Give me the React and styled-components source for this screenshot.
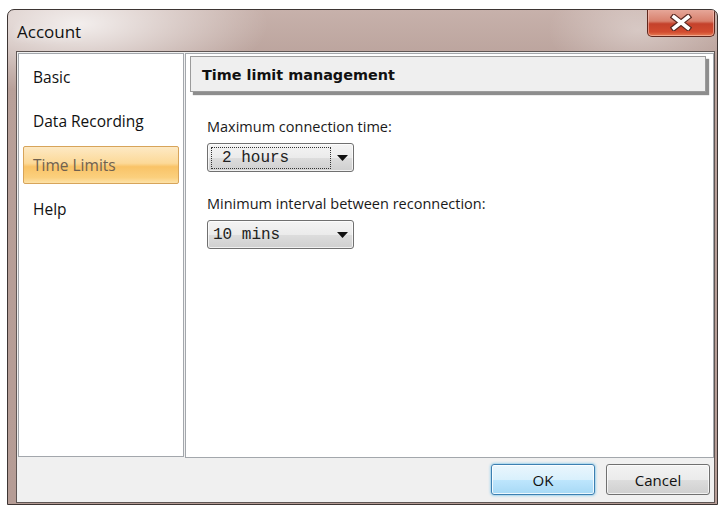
import React, { useState } from 'react'
import styled, { createGlobalStyle } from 'styled-components'

const Global = createGlobalStyle`
  html, body {
    margin: 0;
    padding: 0;
    background: #ffffff;
  }
  body {
    font-family: "Open Sans", "Noto Sans", sans-serif;
  }
`

const Frame = styled.div`
  margin: 9px 0 0 7px;
  width: 711px;
  height: 496px;
  box-sizing: border-box;
  border: 1px solid #3d3533;
  border-radius: 7px 7px 0 0;
  background:
    radial-gradient(ellipse 190px 70px at 70px 14px, rgba(255, 255, 255, 0.8), rgba(255, 255, 255, 0) 100%),
    radial-gradient(ellipse 90px 50px at 630px 20px, rgba(255, 255, 255, 0.35), rgba(255, 255, 255, 0) 100%),
    linear-gradient(180deg, #c7b1ab 0%, #b8a099 12%, #b59c95 100%);
  display: flex;
  flex-direction: column;
  overflow: hidden;
`

const TitleBar = styled.div`
  height: 41px;
  display: flex;
  align-items: flex-start;
  justify-content: space-between;
  padding-left: 9px;
`

const Caption = styled.div`
  font-size: 17px;
  color: #111;
  margin-top: 10px;
  text-shadow: 0 0 8px rgba(255, 255, 255, 0.9);
`

const CloseButton = styled.div`
  width: 68px;
  height: 28px;
  margin-top: -1px;
  margin-right: 2px;
  box-sizing: border-box;
  border: 1px solid #5e261c;
  border-top: none;
  border-radius: 0 0 5px 5px;
  background: linear-gradient(180deg, #e7aa9c 0%, #d8806d 45%, #c4412b 55%, #d24b2f 85%, #e67e55 100%);
  box-shadow: inset 0 0 0 1px rgba(255, 210, 200, 0.5);
  display: flex;
  align-items: center;
  justify-content: center;
`

const Client = styled.div`
  flex: 1;
  margin: 0 2px 1px 8px;
  border: 1px solid #5f5654;
  background: #f0f0f0;
  display: flex;
  flex-direction: column;
`

const Body = styled.div`
  height: 406px;
  display: flex;
  gap: 1px;
  padding: 1px 0 0 1px;
  box-sizing: border-box;
`

const Sidebar = styled.div`
  width: 166px;
  height: 404px;
  box-sizing: border-box;
  background: #fff;
  border: 1px solid #a3a7ac;
  padding: 4px 4px 0 4px;
  display: flex;
  flex-direction: column;
  gap: 6px;
`

const NavItem = styled.div`
  height: 38px;
  box-sizing: border-box;
  display: flex;
  align-items: center;
  padding-left: 9px;
  font-size: 15.5px;
  color: ${p => (p.$active ? '#6f6150' : '#111')};
  border-radius: 2px;
  border: 1px solid ${p => (p.$active ? '#d7a45a' : 'transparent')};
  background: ${p =>
    p.$active
      ? 'linear-gradient(180deg, #fde9c4 0%, #fcd998 45%, #f9c367 55%, #fbd07e 85%, #fde2a8 100%)'
      : 'transparent'};
`

const Panel = styled.div`
  flex: 1;
  height: 405px;
  box-sizing: border-box;
  background: #fff;
  border: 1px solid #a3a7ac;
  padding: 2px 7px 0 4px;
`

const Header = styled.div`
  height: 36px;
  box-sizing: border-box;
  border: 1px solid #9b9b9b;
  background: #efefef;
  box-shadow: 3px 3px 1px #8d8d8d;
  display: flex;
  align-items: center;
  padding: 1px 0 0 11px;
  font-family: "DejaVu Sans", sans-serif;
  font-weight: bold;
  font-size: 14.4px;
  color: #111;
`

const Form = styled.div`
  padding: 25px 0 0 17px;
  display: flex;
  flex-direction: column;
`

const Label = styled.div`
  font-size: 14.5px;
  color: #1a1a1a;
  line-height: 20px;
  margin-bottom: 6px;
  margin-top: ${p => p.$gap || 0}px;
`

const Select = styled.div`
  width: 147px;
  height: 29px;
  box-sizing: border-box;
  border: 1px solid #707070;
  border-radius: 3px;
  background: linear-gradient(180deg, #f4f4f4 0%, #ebebeb 50%, #dddddd 51%, #cfcfcf 100%);
  box-shadow: inset 0 0 0 1px rgba(255, 255, 255, 0.7);
  display: flex;
  align-items: center;
  padding: 2px 5px 2px 3px;
  gap: 6px;
`

const Value = styled.div`
  flex: 1;
  height: 22px;
  box-sizing: border-box;
  display: flex;
  align-items: center;
  padding-left: ${p => (p.$focused ? 10 : 1)}px;
  border: 1px dotted ${p => (p.$focused ? '#333' : 'transparent')};
  font-family: "Liberation Mono", "Courier New", monospace;
  font-size: 16px;
  color: #222;
`

const Footer = styled.div`
  flex: 1;
  display: flex;
  justify-content: flex-end;
  align-items: flex-start;
  gap: 11px;
  padding: 6px 4px 0 0;
`

const Button = styled.div`
  width: 104px;
  height: 31px;
  box-sizing: border-box;
  border-radius: 3px;
  border: 1px solid ${p => (p.$primary ? '#3c7fb1' : '#707070')};
  background: ${p =>
    p.$primary
      ? 'linear-gradient(180deg, #eaf6fd 0%, #d9f0fc 50%, #bee6fd 51%, #a7d9f5 100%)'
      : 'linear-gradient(180deg, #f2f2f2 0%, #ebebeb 50%, #dddddd 51%, #cfcfcf 100%)'};
  box-shadow: ${p =>
    p.$primary
      ? 'inset 0 0 0 1px rgba(255,255,255,0.8), 0 0 3px #4ab3e8'
      : 'inset 0 0 0 1px rgba(255,255,255,0.7)'};
  display: flex;
  align-items: center;
  justify-content: center;
  font-size: 15px;
  color: #111;
`

const Arrow = () => (
  <svg width="11" height="6" viewBox="0 0 11 6">
    <path d="M0 0 H11 L5.5 6 Z" fill="#111" />
  </svg>
)

const CloseGlyph = () => (
  <svg width="22" height="17" viewBox="0 0 22 17">
    <path d="M4 3 L18 14 M18 3 L4 14" stroke="#5a2a22" strokeWidth="6" strokeLinecap="square" />
    <path d="M4 3 L18 14 M18 3 L4 14" stroke="#ffffff" strokeWidth="3.6" strokeLinecap="square" />
  </svg>
)

const Dropdown = ({ value, focused }) => (
  <Select>
    <Value $focused={focused}>{value}</Value>
    <Arrow />
  </Select>
)

const pages = ['Basic', 'Data Recording', 'Time Limits', 'Help']

export default function App() {
  const [page, setPage] = useState('Time Limits')

  return (
    <>
      <Global />
      <Frame>
        <TitleBar>
          <Caption>Account</Caption>
          <CloseButton>
            <CloseGlyph />
          </CloseButton>
        </TitleBar>
        <Client>
          <Body>
            <Sidebar>
              {pages.map(p => (
                <NavItem key={p} $active={p === page} onClick={() => setPage(p)}>
                  {p}
                </NavItem>
              ))}
            </Sidebar>
            <Panel>
              <Header>Time limit management</Header>
              <Form>
                <Label>Maximum connection time:</Label>
                <Dropdown value="2 hours" focused />
                <Label $gap={22}>Minimum interval between reconnection:</Label>
                <Dropdown value="10 mins" />
              </Form>
            </Panel>
          </Body>
          <Footer>
            <Button $primary>OK</Button>
            <Button>Cancel</Button>
          </Footer>
        </Client>
      </Frame>
    </>
  )
}
